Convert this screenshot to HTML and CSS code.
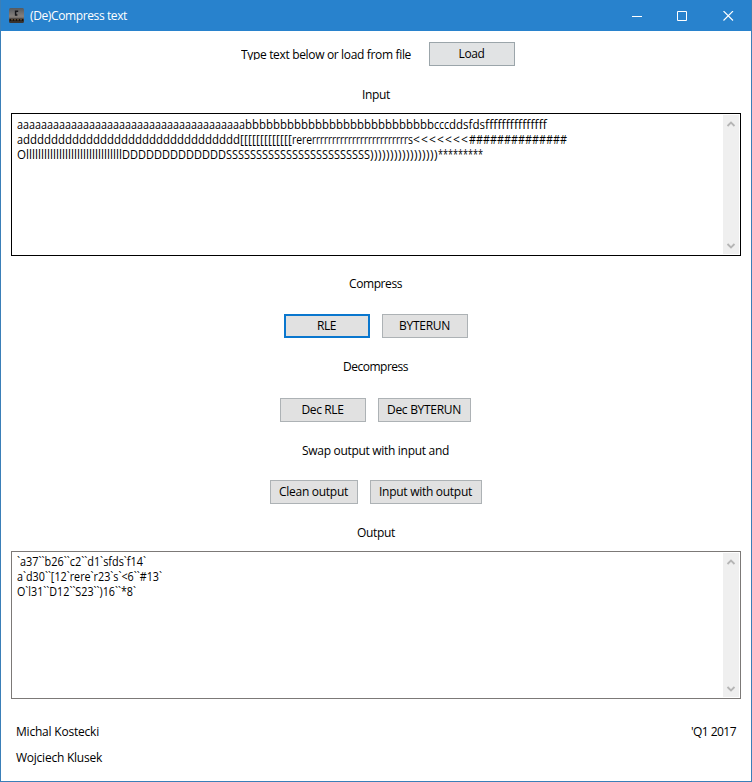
FILE: index.html
```html
<!DOCTYPE html>
<html lang="en">
<head>
<meta charset="utf-8">
<title>(De)Compress text</title>
<link rel="stylesheet" href="styles.css">
</head>
<body>
<div class="window">
  <header class="titlebar">
    <svg class="app-icon" width="15" height="15" viewBox="0 0 15 15">
      <defs><linearGradient id="metal" x1="0" y1="0" x2="0" y2="1"><stop offset="0" stop-color="#55595e"/><stop offset=".55" stop-color="#85807c"/><stop offset=".7" stop-color="#6a6460"/><stop offset="1" stop-color="#332d2b"/></linearGradient></defs>
      <rect width="15" height="15" rx="1.5" fill="url(#metal)"/>
      <path d="M9.2 3.2H6.6V7h1.8" fill="none" stroke="#15161a" stroke-width="1.5"/>
      <path d="M0.5 12h14" stroke="#17120f" stroke-width="2.6"/>
      <path d="M2 11.8h11" stroke="#8d704f" stroke-width=".8" stroke-dasharray="2 1"/>
    </svg>
    <span class="title" data-w="97">(De)Compress text</span>
    <svg class="controls" width="102" height="10" viewBox="0 0 102 10" fill="none" stroke="#fff">
      <path d="M0 5.5h10M45.5.5h9v9h-9z"/><path d="M91.5 0l9.5 9.5M101 0l-9.5 9.5" stroke-width="1.1"/>
    </svg>
  </header>
  <main>
    <div class="load-row"><span class="prompt" data-w="170">Type text below or load from file</span><button class="load"><span data-w="26">Load</span></button></div>
    <div class="label input-label"><span data-w="28">Input</span></div>
    <div class="box input-box">
      <div class="text">
        <div><span data-w="228">aaaaaaaaaaaaaaaaaaaaaaaaaaaaaaaaaaaaaa</span><span data-w="189">bbbbbbbbbbbbbbbbbbbbbbbbbbb</span><span data-w="15">ccc</span><span data-w="14">dd</span><span data-w="22">sfds</span><span data-w="62">fffffffffffffff</span></div>
        <div><span data-w="6">a</span><span data-w="217">ddddddddddddddddddddddddddddddd</span><span data-w="52">[[[[[[[[[[[[[</span><span data-w="20">rere</span><span data-w="96">rrrrrrrrrrrrrrrrrrrrrrrr</span><span data-w="5">s</span><span data-w="56">&lt;&lt;&lt;&lt;&lt;&lt;&lt;</span><span data-w="98">##############</span></div>
        <div><span data-w="9">O</span><span data-w="96">llllllllllllllllllllllllllllllll</span><span data-w="104">DDDDDDDDDDDDD</span><span data-w="144">SSSSSSSSSSSSSSSSSSSSSSSS</span><span data-w="68">)))))))))))))))))</span><span data-w="45">*********</span></div>
      </div>
      <div class="scroll"><svg width="10" height="6" viewBox="0 0 10 6"><path d="M1.5 5L5 1.5 8.5 5"/></svg><svg width="10" height="6" viewBox="0 0 10 6"><path d="M1.5 1L5 4.5 8.5 1"/></svg></div>
    </div>
    <div class="label compress"><span data-w="53">Compress</span></div>
    <div class="buttons"><button class="focused"><span data-w="19">RLE</span></button><button><span data-w="51">BYTERUN</span></button></div>
    <div class="label decompress"><span data-w="65">Decompress</span></div>
    <div class="buttons decode"><button><span data-w="42">Dec RLE</span></button><button class="dec-byterun"><span data-w="74">Dec BYTERUN</span></button></div>
    <div class="label swap"><span data-w="147">Swap output with input and</span></div>
    <div class="buttons"><button class="clean"><span data-w="69">Clean output</span></button><button class="exchange"><span data-w="93">Input with output</span></button></div>
    <div class="label output"><span data-w="38">Output</span></div>
    <div class="box output-box">
      <div class="text">
        <div><span data-w="129">`a37``b26``c2``d1`sfds`f14`</span></div>
        <div><span data-w="145">a`d30``[12`rere`r23`s`&lt;6``#13`</span></div>
        <div><span data-w="119">O`l31``D12``S23``)16``*8`</span></div>
      </div>
      <div class="scroll"><svg width="10" height="6" viewBox="0 0 10 6"><path d="M1.5 5L5 1.5 8.5 5"/></svg><svg width="10" height="6" viewBox="0 0 10 6"><path d="M1.5 1L5 4.5 8.5 1"/></svg></div>
    </div>
  </main>
  <footer>
    <div><div><span data-w="83">Michal Kostecki</span></div><div><span data-w="86">Wojciech Klusek</span></div></div>
    <div><span data-w="45">'Q1 2017</span></div>
  </footer>
</div>
<script src="script.js"></script>
</body>
</html>
```
FILE: styles.css
```css
* { box-sizing: border-box; }
body {
  margin: 0;
  font: 12px/16px "Open Sans", "Noto Sans", sans-serif;
  color: #000;
  background: #fff;
}
span { white-space: pre; }
.window {
  width: 752px;
  height: 782px;
  border: 1px solid #3a7fb8;
  border-top: 0;
  overflow: hidden;
}
.titlebar {
  height: 31px;
  margin: 0 -1px;
  background: #2882cd;
  color: #fff;
  display: flex;
  align-items: center;
  padding: 0 18px 0 9px;
}
.title { margin-left: 6px; }
.controls { margin-left: auto; }
main {
  padding: 0 10px;
  display: flex;
  flex-direction: column;
}
.load-row {
  display: flex;
  margin: 11px 0 0 230px;
  height: 25px;
  gap: 17px;
}
.prompt {
  margin-top: 5px;
  height: 13px;
  overflow: hidden;
  width: 171px;
}
.label {
  height: 16px;
  text-align: center;
}
.input-label { margin: 20px 0 10px; }
.compress, .decompress, .swap { padding-right: 1px; }
.box {
  border: 1px solid #000;
  display: flex;
  justify-content: space-between;
  padding: 1px 1px 1px 5px;
}
.input-box { height: 143px; }
.output-box { height: 148px; border-color: #7c7977; }
.text {
  padding-top: 2px;
  line-height: 15px;
}
.text > div { height: 15px; display: flex; }
.text span { transform-origin: 0 0; }
.output-box .text { padding-top: 1px; }
.scroll {
  width: 16px;
  background: #efefef;
  display: flex;
  flex-direction: column;
  align-items: center;
  justify-content: space-between;
  padding: 6px 0 5px;
}
.scroll path { fill: none; stroke: #b5b5b5; stroke-width: 1.8; }
button {
  font: inherit;
  color: inherit;
  width: 86px;
  height: 24px;
  padding: 0 1px 0 0;
  border: 1px solid #adb2b5;
  border-radius: 0;
  background: #e1e1e1;
  line-height: 22px;
}
.load { border-color: #9ba5aa; background: #e1e3e4; }
.focused { border: 2px solid #0a77ce; line-height: 20px; }
.dec-byterun { width: 93px; }
.clean { width: 88px; }
.exchange { width: 112px; }
.buttons {
  display: flex;
  justify-content: center;
  gap: 12px;
  height: 25px;
}
.decode { padding-right: 1px; }
.compress { margin: 20px 0 22px; }
.decompress { margin: 20px 0 23px; }
.swap { margin: 20px 0 21px; }
.output { margin: 20px 0 10px; }
footer {
  display: flex;
  justify-content: space-between;
  padding: 25px 15px 0;
}
footer > div > div + div { margin-top: 10px; }
```
FILE: script.js
```js
// Fit each text run to its nominal width: condense wide runs in the
// text boxes, adjust letter spacing everywhere else.
document.querySelectorAll('[data-w]').forEach(function (run) {
  var range = document.createRange();
  range.selectNodeContents(run);
  var natural = range.getBoundingClientRect().width;
  var width = Number(run.dataset.w);
  if (run.closest('.text') && natural > width) {
    run.style.width = width + 'px';
    run.style.transform = 'scaleX(' + width / natural + ')';
  } else {
    run.style.letterSpacing = (width - natural) / run.textContent.length + 'px';
  }
});
```
